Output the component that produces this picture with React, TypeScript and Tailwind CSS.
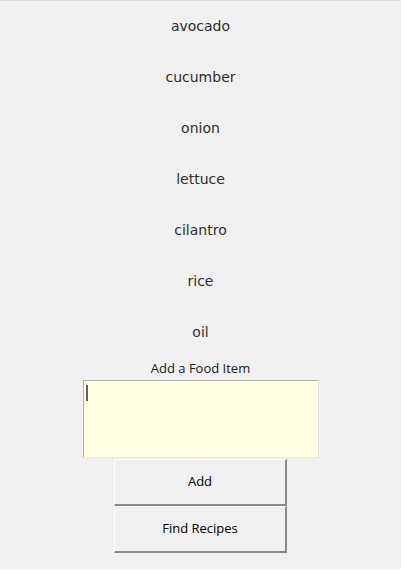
const foods = ["avocado", "cucumber", "onion", "lettuce", "cilantro", "rice", "oil"];

const buttonClass =
  "w-[173px] h-[47px] bg-[#f0f0f0] border border-[#ffffff] border-r-2 border-b-2 border-r-[#8a8a8a] border-b-[#8a8a8a] text-[13px] text-black font-['Open_Sans',sans-serif]";

const App = () => {
  return (
    <div className="w-[407px] h-[573px] bg-white">
      <div className="w-[401px] h-[569px] bg-[#f0f0f0] border-t border-[#dcdcdc] flex flex-col items-center">
        {/* food list */}
        <ul className="w-full flex flex-col">
          {foods.map((food) => (
            <li
              key={food}
              className="h-[51px] flex items-center justify-center text-[14px] text-[#2e2e2e] font-['DejaVu_Sans',sans-serif]"
            >
              {food}
            </li>
          ))}
        </ul>

        <div className="h-[22px] flex items-center justify-center text-[13px] text-[#1a1a1a] font-['Open_Sans',sans-serif]">
          Add a Food Item
        </div>

        {/* entry box */}
        <div className="relative w-[236px] h-[78px] bg-[#fffee0] border border-[#b4b4b4] border-b-[#e8e8e0] border-r-[#e0e0d8]">
          <span className="absolute left-[2px] top-[4px] w-[2px] h-[16px] bg-[#606060]" />
        </div>

        <button className={`${buttonClass} mt-[1px]`}>Add</button>
        <button className={buttonClass}>Find Recipes</button>
      </div>
    </div>
  );
};

export default App;
